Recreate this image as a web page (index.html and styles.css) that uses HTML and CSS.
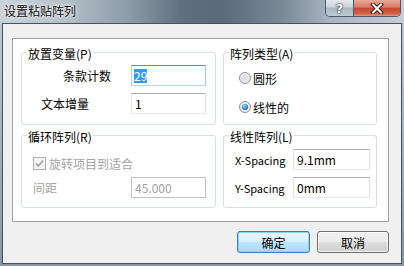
FILE: index.html
```html
<!DOCTYPE html>
<html lang="zh-CN">
<head>
    <meta charset="UTF-8">
    <meta name="viewport" content="width=device-width, initial-scale=1.0">
    <title>设置粘贴阵列</title>
    <link rel="stylesheet" href="styles.css">
</head>
<body>
    <div class="window">
        <div class="titlebar">
            <span class="title">设置粘贴阵列</span>
            <div class="caption-btns">
                <span class="cap-btn help">?</span>
                <span class="cap-btn close">
                    <svg width="14" height="11" viewBox="0 0 14 11">
                        <path d="M3 1.5 L11 9.5 M11 1.5 L3 9.5" stroke="#3b1812" stroke-width="4" stroke-linecap="square"/>
                        <path d="M3 1.5 L11 9.5 M11 1.5 L3 9.5" stroke="#fff" stroke-width="2" stroke-linecap="square"/>
                    </svg>
                </span>
            </div>
        </div>

        <div class="client">
            <div class="panel">
                <fieldset class="group">
                    <legend>放置变量(P)</legend>
                    <div class="rows">
                        <div class="row">
                            <span class="lbl-count">条款计数</span>
                            <span class="field focus"><span class="sel">29</span></span>
                        </div>
                        <div class="row">
                            <span class="lbl-inc">文本增量</span>
                            <span class="field">1</span>
                        </div>
                    </div>
                </fieldset>

                <fieldset class="group">
                    <legend>阵列类型(A)</legend>
                    <div class="radios">
                        <div class="radio-row"><span class="radio"></span>圆形</div>
                        <div class="radio-row"><span class="radio checked"></span>线性的</div>
                    </div>
                </fieldset>

                <fieldset class="group">
                    <legend>循环阵列(R)</legend>
                    <div class="cycle">
                        <div class="check-row disabled">
                            <span class="check">
                                <svg width="11" height="11" viewBox="0 0 11 11">
                                    <path d="M2 5.5 L4.5 8 L9 2.5" fill="none" stroke="#a8a8a8" stroke-width="1.8"/>
                                </svg>
                            </span>
                            旋转项目到适合
                        </div>
                        <div class="row disabled">
                            <span>间距</span>
                            <span class="field off">45.000</span>
                        </div>
                    </div>
                </fieldset>

                <fieldset class="group">
                    <legend>线性阵列(L)</legend>
                    <div class="linear">
                        <div class="row">
                            <span class="lbl-space">X-Spacing</span>
                            <span class="field wide">9.1mm</span>
                        </div>
                        <div class="row">
                            <span class="lbl-space">Y-Spacing</span>
                            <span class="field wide">0mm</span>
                        </div>
                    </div>
                </fieldset>
            </div>

            <div class="buttons">
                <button class="btn default">确定</button>
                <button class="btn">取消</button>
            </div>
        </div>
    </div>
</body>
</html>
```

FILE: styles.css
```css
* {
    box-sizing: border-box;
}
body {
    margin: 0;
    font-family: "Noto Sans CJK SC", sans-serif;
    font-size: 12px;
    color: #000;
}
.window {
    width: 404px;
    height: 266px;
    background: linear-gradient(#c4cdd6, #8696a7);
    overflow: hidden;
}
.titlebar {
    height: 23px;
    display: flex;
    align-items: flex-start;
    background: linear-gradient(90deg, #c9d1d9 0%, #b6c1ca 15%, #8d9ba8 32%, #606f7e 45%, #5a6a7a 55%, #7b8997 70%, #a9b5c1 82%, #c5ced7 100%);
}
.title {
    padding-left: 4px;
    line-height: 21px;
    color: #111;
    text-shadow: 0 0 6px #fff, 0 0 3px rgba(255, 255, 255, 0.8);
}
.caption-btns {
    margin-left: auto;
    margin-right: 3px;
    display: flex;
    height: 17px;
    border: 1px solid #4a5868;
    border-top: 0;
    border-radius: 0 0 5px 5px;
    overflow: hidden;
}
.cap-btn {
    display: flex;
    align-items: center;
    justify-content: center;
    height: 100%;
}
.help {
    width: 28px;
    border-right: 1px solid #4a5868;
    background: linear-gradient(#e4e9ee, #c9d3dc 45%, #a9b6c3 50%, #bfcad4);
    color: #fff;
    font-family: "DejaVu Sans", sans-serif;
    font-weight: bold;
    font-size: 13px;
    text-shadow: 0 0 2px #222, 0 0 1px #000;
}
.close {
    width: 46px;
    background: linear-gradient(#e8a898, #d47a66 45%, #c4482f 52%, #cf6247 85%, #e29a80);
}

.client {
    margin-left: 2px;
    width: 400px;
    height: 241px;
    border: 1px solid #46525f;
    background: #f0f0f0;
    padding: 14px 0 0 9px;
}
.panel {
    width: 377px;
    height: 184px;
    background: #fff;
    border: 1px solid #a0a0a0;
    padding: 6px 0 0 8px;
    display: grid;
    grid-template-columns: 195px 154px;
    grid-template-rows: 80px 80px;
    column-gap: 7px;
    row-gap: 3px;
}
.group {
    margin: 0;
    padding: 0;
    min-width: 0;
    border: 1px solid #d5dfe5;
    border-radius: 3px;
}
.group legend {
    position: relative;
    top: 1px;
    margin-left: 5px;
    padding: 0 1px;
    line-height: 15px;
}
.rows {
    padding: 5px 9px 0 0;
    display: flex;
    flex-direction: column;
    gap: 7px;
}
.row {
    display: flex;
    align-items: center;
    height: 21px;
}
.lbl-count {
    margin-left: 41px;
}
.lbl-inc {
    margin-left: 19px;
}
.field {
    margin-left: auto;
    width: 75px;
    height: 21px;
    display: flex;
    align-items: center;
    padding-left: 3px;
    background: #fff;
    border: 1px solid;
    border-color: #abadb3 #dbdfe6 #e3e9ef #e2e3ea;
}
.field.focus {
    border-color: #5d8cb8 #a4c9e3 #b7d9ed #b5cfe7;
}
.field.off {
    border-color: #c2c2c2;
    color: #a3a3a3;
}
.field.wide {
    margin-left: 0;
    width: 77px;
}
.sel {
    margin-left: -1px;
    background: #3399ff;
    color: #fff;
    line-height: 14px;
}

.radios {
    padding: 10px 0 0 15px;
    display: flex;
    flex-direction: column;
    gap: 13px;
}
.radio-row {
    display: flex;
    align-items: center;
    height: 16px;
    gap: 2px;
}
.radio {
    width: 12px;
    height: 12px;
    border-radius: 50%;
    border: 1px solid #8f8f8f;
    background: radial-gradient(circle at 50% 50%, #d8d8d8 0%, #e6e6e6 45%, #fafafa 100%);
    display: flex;
    align-items: center;
    justify-content: center;
}
.radio.checked::after {
    content: "";
    width: 6px;
    height: 6px;
    border-radius: 50%;
    background: radial-gradient(circle at 40% 35%, #9edcff 0%, #2a82c8 55%, #0d4f86 100%);
}

.cycle {
    padding: 14px 9px 0 11px;
    display: flex;
    flex-direction: column;
    gap: 7px;
}
.check-row {
    display: flex;
    align-items: center;
    height: 13px;
    gap: 3px;
}
.check {
    width: 13px;
    height: 13px;
    border: 1px solid #b1b1b1;
    background: #f4f4f4;
    display: flex;
    align-items: center;
    justify-content: center;
}
.disabled {
    color: #a3a3a3;
}

.linear {
    padding: 6px 6px 0 11px;
    display: flex;
    flex-direction: column;
    gap: 7px;
}
.lbl-space {
    width: 58px;
    font-size: 11px;
}

.buttons {
    display: flex;
    justify-content: flex-end;
    gap: 7px;
    margin-top: 9px;
    padding-right: 12px;
}
.btn {
    width: 72px;
    height: 22px;
    padding: 0;
    border: 1px solid #707070;
    border-radius: 3px;
    font-family: "Noto Sans CJK SC", sans-serif;
    font-size: 12px;
    color: #000;
    background: linear-gradient(#f2f2f2, #ebebeb 48%, #dddddd 52%, #cfcfcf);
    box-shadow: inset 0 0 0 1px rgba(255, 255, 255, 0.7);
}
.btn.default {
    width: 73px;
    border-color: #3c7fb1;
    background: linear-gradient(#eaf6fd, #d9f0fc 48%, #bee6fd 52%, #a7d9f5);
    box-shadow: inset 0 0 0 1px #8fd3f5;
}
```
